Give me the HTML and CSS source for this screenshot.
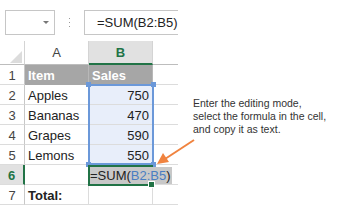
FILE: index.html
```html
<!DOCTYPE html>
<html>
<head>
<meta charset="utf-8">
<link rel="stylesheet" href="styles.css">
</head>
<body>
<div class="page">
  <div class="sheet">
    <div class="bar">
      <div class="namebox"><span class="caret"></span></div>
      <div class="dots"><i></i><i></i><i></i></div>
      <div class="fx">=SUM(B2:B5)</div>
    </div>
    <div class="gridwrap">
      <div class="grid">
        <div class="corner"><span class="tri"></span></div>
        <div class="ch">A</div>
        <div class="ch sel">B</div>
        <div class="ch"></div>

        <div class="rh">1</div>
        <div class="c hd">Item</div>
        <div class="c hd">Sales</div>
        <div class="c"></div>

        <div class="rh">2</div>
        <div class="c">Apples</div>
        <div class="c num ref">750</div>
        <div class="c"></div>

        <div class="rh">3</div>
        <div class="c">Bananas</div>
        <div class="c num ref">470</div>
        <div class="c"></div>

        <div class="rh">4</div>
        <div class="c">Grapes</div>
        <div class="c num ref">590</div>
        <div class="c"></div>

        <div class="rh">5</div>
        <div class="c">Lemons</div>
        <div class="c num ref">550</div>
        <div class="c"></div>

        <div class="rh rsel">6</div>
        <div class="c"></div>
        <div class="c"></div>
        <div class="c"></div>

        <div class="rh">7</div>
        <div class="c bold">Total:</div>
        <div class="c"></div>
        <div class="c"></div>
      </div>
      <div class="grid over">
        <div class="range">
          <span class="h tl"></span><span class="h tr"></span><span class="h bl"></span><span class="h br"></span>
        </div>
        <div class="edit">
          <span class="etext">=SUM(<span class="blue">B2:B5</span>)</span>
          <span class="fill"></span>
        </div>
      </div>
    </div>
  </div>
  <div class="note">
    <p>Enter the editing mode,</p>
    <p>select the formula in the cell,</p>
    <p>and copy it as text.</p>
  </div>
  <svg class="arrow" width="339" height="205" viewBox="0 0 339 205">
    <line x1="194" y1="140" x2="165" y2="159" stroke="#f0833f" stroke-width="2"/>
    <polygon points="157,164 163,153 169,162" fill="#f0833f"/>
  </svg>
</div>
</body>
</html>
```

FILE: styles.css
```css
html, body {
  margin: 0;
  padding: 0;
  background: #fff;
}
.page {
  position: relative;
  width: 339px;
  height: 205px;
  overflow: hidden;
  display: flex;
  font-family: "Liberation Sans", Arial, sans-serif;
}
.sheet {
  width: 178px;
  flex: none;
  overflow: hidden;
}
.bar {
  display: flex;
  align-items: center;
  padding: 10px 0 0 5px;
  height: 25px;
}
.namebox {
  box-sizing: border-box;
  width: 50px;
  height: 25px;
  border: 1px solid #c6c6c6;
  position: relative;
  flex: none;
}
.caret {
  position: absolute;
  left: 37px;
  top: 10px;
  width: 0;
  height: 0;
  border-left: 3px solid transparent;
  border-right: 3px solid transparent;
  border-top: 3px solid #777;
}
.dots {
  width: 29px;
  flex: none;
  display: flex;
  flex-direction: column;
  align-items: center;
  gap: 3px;
}
.dots i {
  display: block;
  width: 1px;
  height: 1px;
  background: #999;
}
.fx {
  box-sizing: border-box;
  flex: none;
  width: 130px;
  height: 25px;
  border: 1px solid #c6c6c6;
  padding-left: 12px;
  font-size: 13px;
  line-height: 23px;
  color: #222;
}
.gridwrap {
  position: relative;
  margin-top: 6px;
}
.grid {
  display: grid;
  grid-template-columns: 25px 64px 64px 64px;
  grid-template-rows: 24px repeat(7, 20px);
  font-size: 13px;
  color: #222;
}
.grid.over {
  position: absolute;
  left: 0;
  top: 0;
  pointer-events: none;
}
.grid > div {
  box-sizing: border-box;
}
.corner {
  position: relative;
  border-right: 1px solid #d4d4d4;
  border-bottom: 1px solid #bdbdbd;
}
.tri {
  position: absolute;
  left: 10px;
  top: 10px;
  width: 0;
  height: 0;
  border-left: 12px solid transparent;
  border-bottom: 12px solid #dcdcdc;
}
.ch {
  text-align: center;
  color: #444;
  border-right: 1px solid #d4d4d4;
  border-bottom: 1px solid #bdbdbd;
  padding-top: 1px;
  line-height: 22px;
}
.ch.sel {
  background: #e1e1e1;
  color: #217346;
  font-weight: bold;
  border-bottom: 2px solid #217346;
}
.rh {
  text-align: center;
  color: #444;
  line-height: 20px;
  padding-top: 1px;
  border-right: 1px solid #c8c8c8;
  border-bottom: 1px solid #dcdcdc;
}
.rh.rsel {
  background: #e1e1e1;
  color: #217346;
  font-weight: bold;
  border-right: 2px solid #217346;
}
.c {
  line-height: 19px;
  padding: 1px 3px 0 3px;
  border-right: 1px solid #dcdcdc;
  border-bottom: 1px solid #dcdcdc;
  white-space: nowrap;
}
.c.hd {
  background: #a6a6a6;
  color: #fff;
  font-weight: bold;
  border-color: #a6a6a6;
  border-right-color: #b8b8b8;
}
.c.num {
  text-align: right;
}
.c.ref {
  background: #e8eefa;
}
.c.bold {
  font-weight: bold;
}
.range {
  grid-column: 3;
  grid-row: 3 / 7;
  margin: -1px -1px 0 -1px;
  border: 2px solid #6b98d9;
  position: relative;
}
.h {
  position: absolute;
  width: 5px;
  height: 5px;
  background: #6b98d9;
}
.tl { left: -4px; top: -4px; }
.tr { right: -4px; top: -4px; }
.bl { left: -4px; bottom: -4px; }
.br { right: -4px; bottom: -4px; }
.edit {
  grid-column: 3;
  grid-row: 7;
  margin: 0 0 -1px -1px;
  border: 2px solid #217346;
  position: relative;
  background: #fff;
}
.etext {
  position: absolute;
  left: 0;
  top: 0;
  height: 17px;
  padding-right: 1px;
  background: #c8c8c8;
  white-space: nowrap;
  font-size: 13px;
  line-height: 18px;
  color: #222;
}
.blue {
  color: #4a7ec2;
}
.fill {
  position: absolute;
  right: -4px;
  bottom: -4px;
  width: 5px;
  height: 5px;
  background: #217346;
  border: 1px solid #fff;
}
.note {
  padding: 97px 0 0 15px;
  font-size: 10.5px;
  line-height: 13px;
  color: #333;
}
.note p {
  margin: 0;
  white-space: nowrap;
}
.arrow {
  position: absolute;
  left: 0;
  top: 0;
  pointer-events: none;
}
```
